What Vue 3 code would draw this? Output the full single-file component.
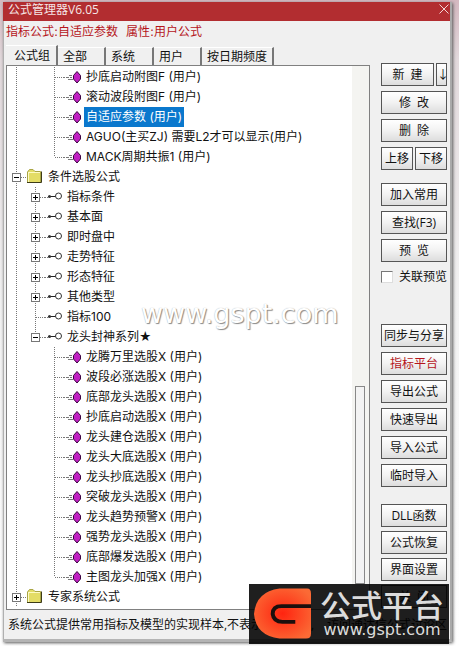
<template>
  <div class="desktop">
    <main class="window">
      <header class="title-bar">
        <span>公式管理器V6.05</span>
        <button class="close" aria-label="关闭">
          <svg width="10" height="10" viewBox="0 0 10 10"><path d="M0.5 0.5L9.5 9.5M9.5 0.5L0.5 9.5" stroke="#f3d5d5" fill="none" /></svg>
        </button>
      </header>

      <p class="current"><span>指标公式:自适应参数</span><span>属性:用户公式</span></p>

      <div class="body">
        <div class="left">
          <nav class="tabs">
            <button v-for="(tab, i) in tabs" :key="tab" class="tab" :class="{ active: activeTab === i }" @click="activeTab = i">{{ tab }}</button>
          </nav>
          <div class="panel">
            <ul class="tree">
              <li v-for="(row, i) in rows" :key="i" class="row">
                <svg v-for="(cell, c) in row.cells" :key="c" class="cell" width="19" height="20" viewBox="0 0 19 20">
                  <path v-if="lines[cell]" :d="lines[cell]" class="dots" />
                  <g v-if="cell === 'plus' || cell === 'minus' || cell === 'last'">
                    <rect x="5.5" y="6.5" width="8" height="8" fill="#fff" stroke="#777" />
                    <path :d="cell === 'plus' ? 'M7 10.5H12M9.5 8V13' : 'M7 10.5H12'" stroke="#000" fill="none" />
                  </g>
                </svg>
                <svg class="icon" width="22" height="20" viewBox="0 0 22 20">
                  <g v-if="row.type === 'folder'">
                    <path d="M1.5 15.5V5L3.5 2.5H7L9 4.5H14.5V15.5Z" fill="#e4dd66" stroke="#a9a545" />
                    <path d="M2 5.5H14M2.5 5V15" stroke="#fcfac4" fill="none" />
                    <path d="M1 15.5H15.5V4.5" stroke="#3d3b18" fill="none" />
                  </g>
                  <g v-else-if="row.type === 'key'">
                    <path d="M0 10.5H3" class="dots" />
                    <path d="M3 9.5H11" stroke="#222" fill="none" />
                    <circle cx="4.5" cy="9.5" r="1.5" fill="#333" />
                    <circle cx="13.5" cy="9" r="3" fill="#fff" stroke="#333" />
                  </g>
                  <g v-else>
                    <path d="M0 10.5H3" class="dots" />
                    <path d="M5 8.5H8M3 10.5H5M6 10.5H8M4 12.5H9" stroke="#777" fill="none" />
                    <path d="M13 4.5L16.5 8.5V12L13 16L9.5 12V8.5Z" fill="#c01fc2" stroke="#3b0640" />
                  </g>
                </svg>
                <span class="label" :class="{ selected: row.selected }">{{ row.text }}</span>
              </li>
            </ul>
            <div class="scrollbar"><div class="thumb"></div></div>
          </div>
        </div>

        <aside class="actions">
          <div class="group">
            <div class="pair new"><button class="btn">新&ensp;建</button><button class="btn arrow">↓</button></div>
            <button class="btn">修&ensp;改</button>
            <button class="btn">删&ensp;除</button>
            <div class="pair"><button class="btn">上移</button><button class="btn">下移</button></div>
          </div>
          <div class="group find">
            <button class="btn">加入常用</button>
            <button class="btn">查找(F3)</button>
            <button class="btn">预&ensp;览</button>
            <label class="check"><input type="checkbox" /><span>关联预览</span></label>
          </div>
          <div class="group share">
            <button class="btn">同步与分享</button>
            <button class="btn red">指标平台</button>
            <button class="btn">导出公式</button>
            <button class="btn">快速导出</button>
            <button class="btn">导入公式</button>
            <button class="btn">临时导入</button>
          </div>
          <div class="group system">
            <button class="btn">DLL函数</button>
            <button class="btn">公式恢复</button>
            <button class="btn">界面设置</button>
            <button class="btn">关&ensp;闭</button>
          </div>
        </aside>
      </div>

      <footer class="status">
        <span>系统公式提供常用指标及模型的实现样本,不表示操作建议,</span>
        <a href="#">访问通达信公式讨论区</a>
      </footer>
    </main>

    <div class="watermark">www.gspt.com</div>
    <div class="faint">
      <span v-for="n in 7" :key="n">分析家公式网www.70822.com 分析家</span>
    </div>

    <div class="brand">
      <svg width="58" height="51" viewBox="0 0 58 51">
        <defs>
          <radialGradient id="flame" cx="0.5" cy="0.5" r="0.6">
            <stop offset="0" stop-color="#ff2410" />
            <stop offset="1" stop-color="#fb6a35" />
          </radialGradient>
        </defs>
        <path d="M26 0H54Q58 0 58 5V46Q58 51 53 51H26Q2 48 0 26Q2 3 26 0Z" fill="url(#flame)" />
        <path d="M58 18H28Q19 18 19 26Q20 34 29 34H42" fill="none" stroke="#1c0f0d" stroke-width="4" />
      </svg>
      <div class="brand-text">
        <strong>公式平台</strong>
        <span>www.gspt.com</span>
      </div>
    </div>
  </div>
</template>

<script setup>
import { ref } from 'vue'

const tabs = ['公式组', '全部', '系统', '用户', '按日期频度']
const activeTab = ref(0)

// 树形连接线
const lines = {
  v: 'M9.5 0V20',
  tee: 'M9.5 0V20M10 10.5H19',
  end: 'M9.5 0V10M10 10.5H19',
  plus: 'M9.5 0V20M14 10.5H19',
  minus: 'M9.5 0V20M14 10.5H19',
  last: 'M9.5 0V10M14 10.5H19'
}

const leaf = (text, mid, end, selected = false) => ({ type: 'gem', text, selected, cells: ['v', mid, end ? 'end' : 'tee'] })
const folder = (text, box) => ({ type: 'folder', text, cells: [box] })
const key = (text, box) => ({ type: 'key', text, cells: ['v', box] })

const indicators = ['抄底启动附图F (用户)', '滚动波段附图F (用户)', '自适应参数 (用户)', 'AGUO(主买ZJ) 需要L2才可以显示(用户)', 'MACK周期共振1 (用户)']
const categories = ['指标条件', '基本面', '即时盘中', '走势特征', '形态特征', '其他类型']
const pickers = ['龙腾万里选股X', '波段必涨选股X', '底部龙头选股X', '抄底启动选股X', '龙头建仓选股X', '龙头大底选股X', '龙头抄底选股X', '突破龙头选股X', '龙头趋势预警X', '强势龙头选股X', '底部爆发选股X', '主图龙头加强X']

const rows = [
  ...indicators.map((t, i) => leaf(t, 'none', i === indicators.length - 1, i === 2)),
  folder('条件选股公式', 'minus'),
  ...categories.map(t => key(t, 'plus')),
  key('指标100', 'tee'),
  key('龙头封神系列★', 'last'),
  ...pickers.map((t, i) => leaf(t + ' (用户)', 'none', i === pickers.length - 1)),
  folder('专家系统公式', 'plus')
]
</script>

<style>
body {
  margin: 0;
  background: #fff;
}
</style>

<style scoped>
.desktop {
  position: relative;
  box-sizing: border-box;
  padding: 2px 7px 4px 3px;
  background: linear-gradient(#d4b8c0, #e2d9dc 60px, #f2f2f2 300px, #fff);
  font: 12px/20px "Open Sans", "Noto Sans CJK SC", sans-serif;
  color: #111;
}

.window {
  border-right: 2px solid #aaa;
  border-bottom: 3px solid #b4b4b4;
  background: #f0f0f0;
  box-shadow: 1px 1px 3px #555, inset 1px 0 #b0b0b0;
}

.title-bar {
  display: flex;
  justify-content: space-between;
  height: 19px;
  padding: 0 1px 0 5px;
  line-height: 16px;
  background: #b22d30;
  color: #f5e6e6;
}

.close {
  display: flex;
  padding: 2px 0;
  border: 0;
  background: none;
}

.current {
  display: flex;
  gap: 8px;
  margin: 0;
  padding: 1px 3px 4px;
  color: #b5151b;
  font-family: "DejaVu Sans", "Noto Sans CJK SC", sans-serif;
}

.body {
  display: flex;
  padding: 0 3px;
  gap: 11px;
}

.left {
  flex: 1;
  min-width: 0;
  display: flex;
  flex-direction: column;
}

.tabs {
  display: flex;
  align-items: flex-end;
  height: 19px;
}

.tab {
  height: 18px;
  padding: 0 17px 0 5px;
  border: 0;
  border-top: 1px solid #fff;
  border-right: 2px solid #777;
  background: #f0f0f0;
  font: inherit;
  line-height: 18px;
  color: inherit;
  white-space: nowrap;
}

.tab.active {
  height: 20px;
  padding: 0 6px 0 8px;
}

.tab:last-child {
  padding-right: 5px;
}

.panel {
  display: flex;
  border: 1px solid #808080;
  background: #fff;
}

.tree {
  flex: 1;
  min-width: 0;
  margin: 0;
  padding: 1px 0 2px;
  list-style: none;
}

.row {
  display: flex;
  height: 20px;
}

.cell,
.icon {
  flex: none;
}

.dots {
  fill: none;
  stroke: #777;
  stroke-dasharray: 1 1;
}

.label {
  padding: 0 2px;
  margin-left: -2px;
  font-family: Inter, "Noto Sans CJK SC", sans-serif;
  white-space: nowrap;
}

.selected {
  background: #0a78cd;
  color: #fff;
}

.scrollbar {
  display: flex;
  flex-direction: column;
  width: 17px;
  padding: 0 4px 0 3px;
  box-sizing: border-box;
  background: #f4f4f1;
}

.thumb {
  height: 196px;
  margin-top: 320px;
  border: 1px solid #888;
  background: #f3f3f3;
}

.actions {
  display: flex;
  flex-direction: column;
  width: 66px;
  padding-top: 17px;
}

.group {
  display: flex;
  flex-direction: column;
  gap: 5px;
}

.find {
  margin-top: 13px;
}

.share {
  margin-top: 37px;
}

.system {
  margin-top: 17px;
  gap: 4px;
}

.pair {
  display: grid;
  grid-template-columns: 1fr 1fr;
  gap: 2px;
}

.pair.new {
  grid-template-columns: 1fr 11px;
}

.btn {
  height: 23px;
  padding: 0;
  border: 1px solid #555;
  background: linear-gradient(#fff, #f2f2f2 50%, #ddd);
  font: inherit;
  line-height: 20px;
  color: #111;
  white-space: nowrap;
}

.red {
  color: #b5151b;
}

.check {
  display: flex;
  align-items: center;
  gap: 6px;
  height: 20px;
  white-space: nowrap;
}

.check input {
  appearance: none;
  flex: none;
  width: 12px;
  height: 12px;
  margin: 0;
  border: 1px solid #777;
  border-right-color: #ddd;
  border-bottom-color: #ddd;
  background: #fff;
}

.status {
  display: flex;
  justify-content: space-between;
  padding: 5px 3px 4px 5px;
  white-space: nowrap;
}

.status a {
  color: inherit;
  text-decoration: none;
}

.watermark {
  position: absolute;
  left: 141px;
  top: 298px;
  font: 27px/32px "DejaVu Sans", sans-serif;
  color: #fff;
  text-shadow: 1px 1px 1px #888, 0 0 1px #aaa;
}

.faint {
  position: absolute;
  inset: 29px 9px auto 14px;
  display: flex;
  flex-direction: column;
  pointer-events: none;
  font: 22px/81px "DejaVu Sans", "Noto Sans CJK SC", sans-serif;
  color: rgba(0, 0, 0, 0.02);
  white-space: nowrap;
}

.brand {
  position: absolute;
  right: 10px;
  bottom: 2px;
  display: flex;
  gap: 9px;
  box-sizing: border-box;
  width: 200px;
  height: 60px;
  padding: 4px 5px;
  background: rgba(0, 0, 0, 0.88);
}

.brand-text {
  display: flex;
  flex-direction: column;
  align-items: center;
  color: #dcdcdc;
  white-space: nowrap;
}

.brand-text strong {
  font: 500 31px/32px "Noto Sans CJK SC", sans-serif;
}

.brand-text span {
  font: 16px/20px "DejaVu Sans", sans-serif;
}
</style>
